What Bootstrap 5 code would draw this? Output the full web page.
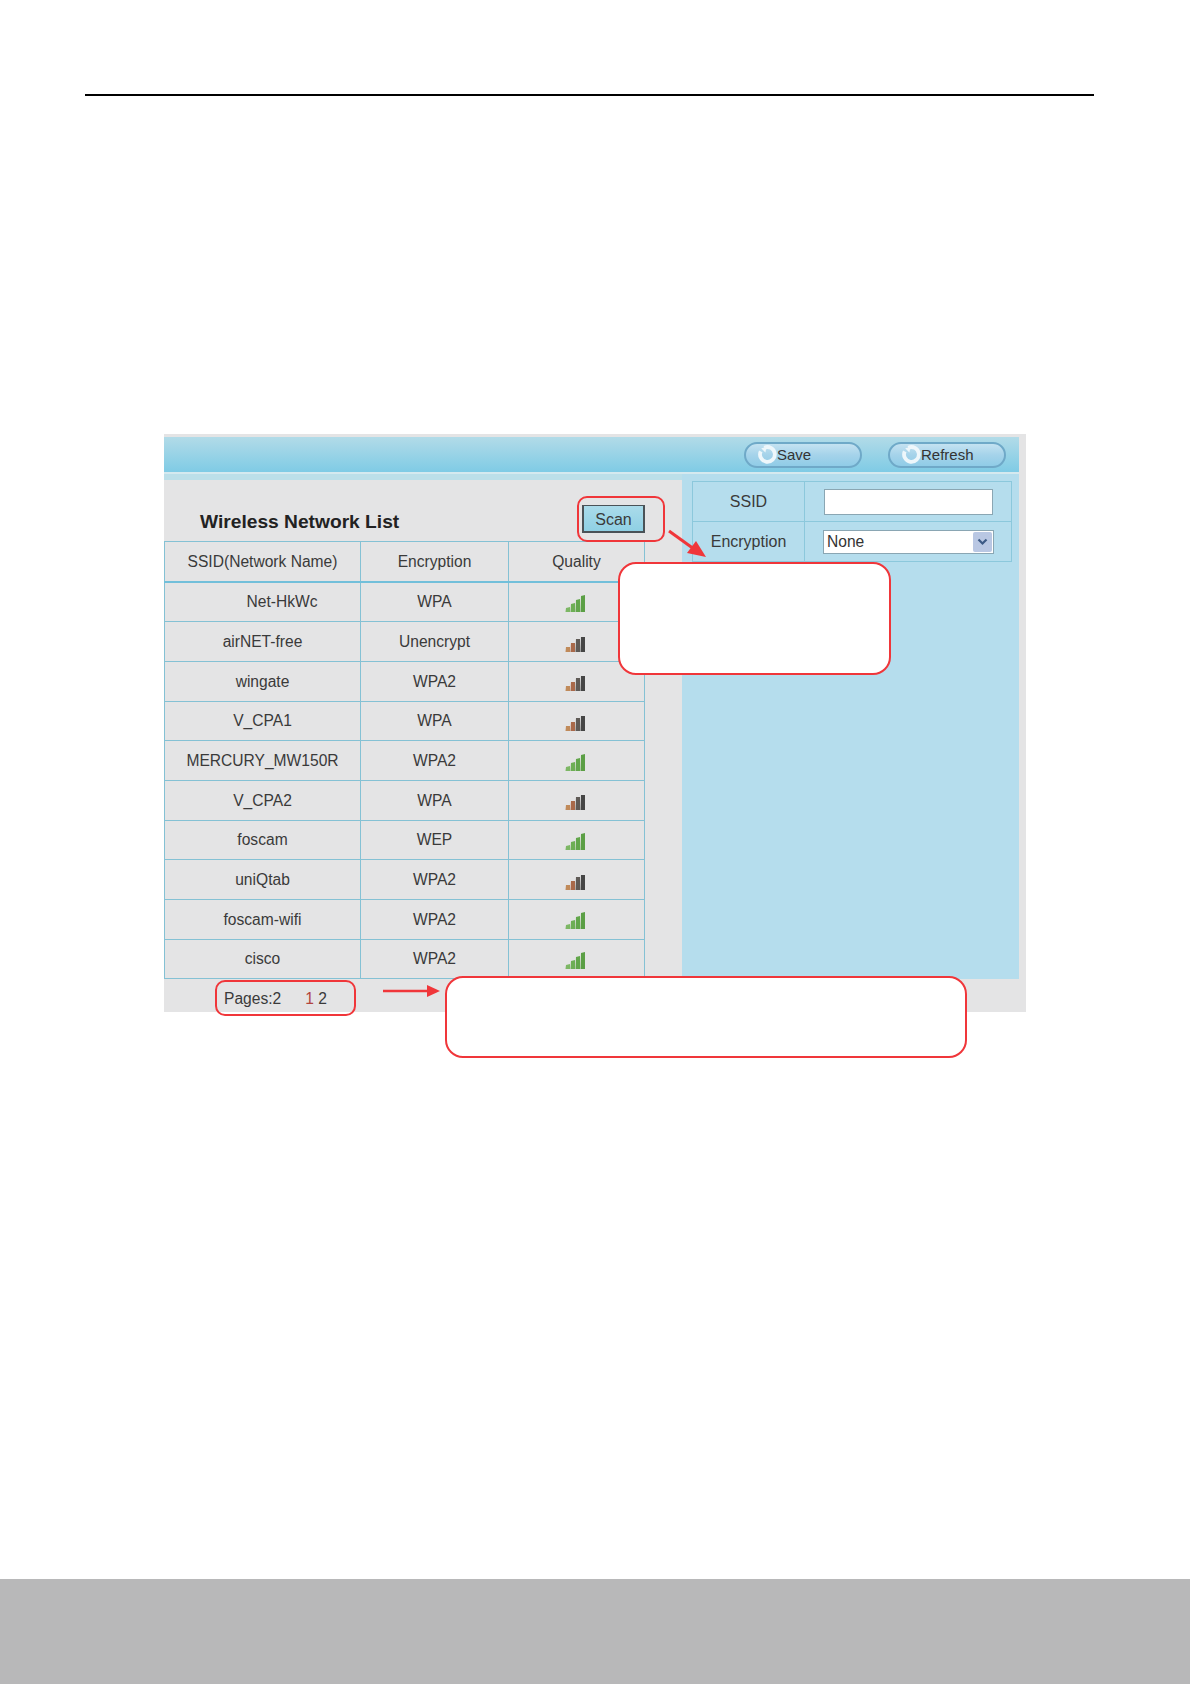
<!DOCTYPE html>
<html lang="en">
<head>
<meta charset="utf-8">
<title>Wireless Network List</title>
<link href="https://cdn.jsdelivr.net/npm/bootstrap@5.3.0/dist/css/bootstrap.min.css" rel="stylesheet">
<style>
html,body{margin:0;background:#fff}
body{font-family:"Liberation Sans",Arial,sans-serif;color:#2e2e2e}
.sheet{height:1684px;display:flex;flex-direction:column}
.top-rule{margin:94px 96px 0 85px;border-top:2px solid #000;height:0}
.shot-wrap{margin:338px 0 0 164px;width:862px;position:relative}
.shot{background:#e4e4e5;height:578px;padding:3px 7px 0 0;display:flex;flex-direction:column}
.tool-bar{height:37px;background:linear-gradient(#b2dbe8,#7fcbe5);border-bottom:2px solid #d5e9ef;display:flex;justify-content:flex-end;align-items:center;gap:26px;padding-right:13px;flex:none}
.pill{width:118px;height:26px;border:2px solid #6fa9c8;border-radius:13px;background:linear-gradient(#c4e2f1,#a5d3ea 50%,#90cce7);display:flex;align-items:center;font-size:15px;line-height:1;padding:0 0 0 12px;color:#333}
.pill-icon{width:19px;height:19px;flex:none;filter:blur(.5px)}
.work{flex:none;height:505px;display:flex}
.left-pane{width:518px;background:#e4e4e5;border-top:6px solid #bcdfe9;flex:none;padding-right:37px}
.title-row{height:61px;display:flex;align-items:flex-start;justify-content:space-between;padding:25px 0 0 36px}
.net-title{font-size:19.2px;font-weight:700;color:#222;line-height:1;margin:7px 0 0}
.scan-btn{width:63px;height:28px;padding:3px 0 0;border-style:solid;border-width:1px 2px 2px 2px;border-color:#4a5257;background:linear-gradient(#aadbea,#8fd0e4);font-size:16px;line-height:1;color:#3a3a3a;border-radius:0}
.net-table{width:481px;table-layout:fixed;border-collapse:collapse;margin:0}
.net-table td,.net-table th{border:1px solid #84c1d4;height:39.7px;padding:0;text-align:center;vertical-align:middle;font-size:15.6px;font-weight:400;color:#3a3a3a;background:#e4e4e5}
.net-table th{height:40.5px;border-bottom:2px solid #72bfda}
.net-table td:nth-child(1),.net-table th:nth-child(1){width:196px}
.net-table td:nth-child(2),.net-table th:nth-child(2){width:148px}
.shift-name{padding-left:39px!important}
.bars{display:block;margin:3px auto 0;position:relative;left:-1px;filter:blur(.3px)}
.right-pane{flex:1;background:#b5dded;padding:7px 7px 0 10px}
.form-table{width:320px;table-layout:fixed;border-collapse:collapse;margin:0}
.form-table td{border:1px solid #8cc8dc;height:40px;padding:0;text-align:center;vertical-align:middle;font-size:16px;color:#3a3a3a}
.form-table td:first-child{width:112px}
.ssid-input{display:block;width:169px;height:26px;margin-left:19px;background:#fff;border:1px solid #8aa6b3;border-radius:0;padding:0}
.enc-select{width:171px;height:24px;margin-left:18px;background:#fff;border:1px solid #8aa6b3;display:flex;align-items:center;justify-content:space-between;padding:0 1px 0 3px;font-size:15.6px;color:#333;line-height:1}
.enc-arrow{width:19px;height:20px;background:#b9c7e3;display:flex;align-items:center;justify-content:center;border-radius:2px}
.pager{font-size:15.6px;color:#3a3a3a;padding:10px 0 0 60px;line-height:20px;flex:none}
.pager b{font-weight:400;color:#b2453f;margin-left:24px}
.mark-box{position:absolute;border:2px solid #f0363a;border-radius:10px;pointer-events:none}
.mark-scan{left:413px;top:62px;width:88px;height:46px}
.mark-pages{left:51px;top:546px;width:141px;height:36px}
.bubble{position:absolute;background:#fff;border:2px solid #f0363a;border-radius:18px}
.bubble-a{left:454px;top:128px;width:273px;height:113px}
.bubble-b{left:281px;top:542px;width:522px;height:82px}
.arrow{position:absolute;overflow:visible}
.arrow-a{left:505px;top:97px}
.arrow-b{left:219px;top:550px}
.foot-band{margin-top:auto;height:105px;background:#b8b8b9}
</style>
</head>
<body>
<div class="sheet">
  <div class="top-rule"></div>
  <div class="shot-wrap">
    <div class="shot">
      <div class="tool-bar">
        <div class="pill"><svg class="pill-icon" viewBox="0 0 18 18"><path d="M6 2.6A7 7 0 1 1 2.6 6" fill="none" stroke="#eef7fb" stroke-width="3.6"/><path d="M3 3l5-1-1 5z" fill="#eef7fb"/></svg>Save</div>
        <div class="pill"><svg class="pill-icon" viewBox="0 0 18 18"><path d="M6 2.6A7 7 0 1 1 2.6 6" fill="none" stroke="#eef7fb" stroke-width="3.6"/><path d="M3 3l5-1-1 5z" fill="#eef7fb"/></svg>Refresh</div>
      </div>
      <div class="work">
        <div class="left-pane">
          <div class="title-row">
            <h1 class="net-title">Wireless Network List</h1>
            <button type="button" class="btn scan-btn">Scan</button>
          </div>
          <table class="net-table">
            <thead><tr><th>SSID(Network Name)</th><th>Encryption</th><th>Quality</th></tr></thead>
            <tbody id="rows"></tbody>
          </table>
        </div>
        <div class="right-pane">
          <table class="form-table">
            <tr><td>SSID</td><td><input class="ssid-input" type="text" aria-label="SSID"></td></tr>
            <tr><td>Encryption</td><td><div class="enc-select"><span>None</span><span class="enc-arrow"><svg width="11" height="8" viewBox="0 0 11 8"><path d="M1.5 1.5l4 4 4-4" fill="none" stroke="#3d5a86" stroke-width="2.2"/></svg></span></div></td></tr>
          </table>
        </div>
      </div>
      <div class="pager">Pages:2<b>1</b> 2</div>
    </div>
    <div class="mark-box mark-scan"></div>
    <div class="mark-box mark-pages"></div>
    <svg class="arrow arrow-a" width="40" height="30" viewBox="0 0 40 30"><path d="M0 0L25 18" stroke="#f0363a" stroke-width="3"/><path d="M37 26L18 22L27 10z" fill="#f0363a"/></svg>
    <svg class="arrow arrow-b" width="56" height="14" viewBox="0 0 56 14"><path d="M0 7H46" stroke="#f0363a" stroke-width="2.6"/><path d="M57 7L44 1V13z" fill="#f0363a"/></svg>
    <div class="bubble bubble-a"></div>
    <div class="bubble bubble-b"></div>
  </div>
  <div class="foot-band"></div>
</div>
<script>
const data=[["Net-HkWc","WPA",1,1],["airNET-free","Unencrypt",0],["wingate","WPA2",0],["V_CPA1","WPA",0],["MERCURY_MW150R","WPA2",1],["V_CPA2","WPA",0],["foscam","WEP",1],["uniQtab","WPA2",0],["foscam-wifi","WPA2",1],["cisco","WPA2",1]];
function bars(g){
  const c=g?["#7db765","#6dae55","#62a64b","#5b9f45"]:["#c08a5a","#a9694a","#5f5a56","#454545"];
  const h=g?[5,9,13,17]:[5,9,13,15];
  return '<svg class="bars" width="22" height="17" viewBox="0 0 22 17">'+h.map((v,i)=>{const x=.5+i*5,t=17-v,s=g?1:0;return `<polygon points="${x},17 ${x+4.5},17 ${x+4.5},${t} ${x+.5},${t+s}" fill="${c[i]}"/>`}).join("")+'</svg>';
}
document.getElementById("rows").innerHTML=data.map(r=>`<tr><td${r[3]?' class="shift-name"':''}>${r[0]}</td><td>${r[1]}</td><td>${bars(r[2])}</td></tr>`).join("");
</script>
<script src="https://cdn.jsdelivr.net/npm/bootstrap@5.3.0/dist/js/bootstrap.bundle.min.js"></script>
</body>
</html>
